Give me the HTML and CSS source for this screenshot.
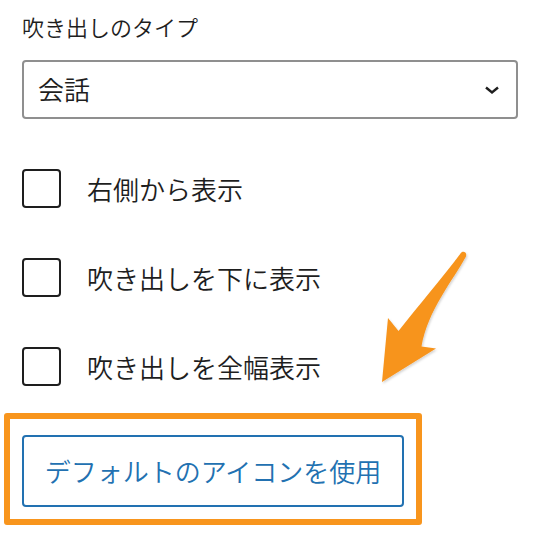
FILE: index.html
```html
<!DOCTYPE html>
<html lang="ja">
<head>
<meta charset="utf-8">
<link rel="stylesheet" href="styles.css">
</head>
<body>
<div class="panel">
  <div class="field-label">吹き出しのタイプ</div>
  <div class="select">
    <span class="select-value">会話</span>
    <svg class="chevron" width="16" height="10" viewBox="0 0 16 10"><path d="M2 2.5 L8 7.5 L14 2.5" fill="none" stroke="#1e1e1e" stroke-width="2.4"/></svg>
  </div>
  <div class="options">
    <label class="check-row"><input type="checkbox" class="check"><span>右側から表示</span></label>
    <label class="check-row"><input type="checkbox" class="check"><span>吹き出しを下に表示</span></label>
    <label class="check-row"><input type="checkbox" class="check"><span>吹き出しを全幅表示</span></label>
  </div>
  <div class="highlight">
    <button class="btn">デフォルトのアイコンを使用</button>
  </div>
</div>
<svg class="arrow" width="544" height="534" viewBox="0 0 544 534">
  <defs>
    <filter id="sh" x="-20%" y="-20%" width="140%" height="140%">
      <feDropShadow dx="1" dy="1.5" stdDeviation="1.2" flood-color="#000" flood-opacity="0.18"/>
    </filter>
  </defs>
  <path filter="url(#sh)" fill="#f7941d" d="M460.5 253.5 C462 250.5 467.5 251.5 466 256.5 C452 282 428 310 421.5 346.5 L436 348.5 L382 382 L388 318 L398.5 331 C418 306 444 276 460.5 253.5 Z"/>
</svg>
</body>
</html>
```
FILE: styles.css
```css
html, body {
  margin: 0;
  padding: 0;
  background: #ffffff;
}
body {
  font-family: "Noto Sans CJK JP", "Noto Sans", sans-serif;
  font-weight: 350;
  color: #1e1e1e;
  width: 544px;
  height: 534px;
  overflow: hidden;
  position: relative;
}
.panel {
  padding: 11px 26px 0 22px;
  display: flex;
  flex-direction: column;
}
.field-label {
  font-size: 22px;
  line-height: 30px;
  color: #1e1e1e;
}
.select {
  margin-top: 19px;
  height: 59px;
  box-sizing: border-box;
  border: 2px solid #8f8f8f;
  border-radius: 4px;
  display: flex;
  align-items: center;
  justify-content: space-between;
  padding: 0 16px 0 14px;
}
.select-value {
  font-size: 26px;
  line-height: 30px;
  margin-top: -2px;
}
.chevron {
  display: block;
}
.options {
  margin-top: 50px;
  display: flex;
  flex-direction: column;
  gap: 50px;
}
.check-row {
  display: flex;
  align-items: center;
  gap: 26px;
  font-size: 26px;
  line-height: 30px;
}
.check {
  appearance: none;
  -webkit-appearance: none;
  margin: 0;
  width: 39px;
  height: 39px;
  box-sizing: border-box;
  border: 2px solid #1e1e1e;
  border-radius: 4px;
  background: #fff;
  flex: none;
}
.highlight {
  margin-top: 27px;
  margin-left: -18px;
  align-self: flex-start;
  border: 6px solid #f8951d;
  border-radius: 3px;
  padding: 16px 12px 12px 12px;
}
.btn {
  display: block;
  font-family: "Noto Sans CJK JP", "Noto Sans", sans-serif;
  font-weight: 350;
  font-size: 26px;
  line-height: 30px;
  color: #2271b1;
  background: #fff;
  border: 2px solid #2271b1;
  border-radius: 4px;
  width: 382px;
  height: 72px;
  padding: 0;
  margin: 0;
  text-align: center;
  white-space: nowrap;
}
.arrow {
  position: absolute;
  left: 0;
  top: 0;
  pointer-events: none;
}
```
